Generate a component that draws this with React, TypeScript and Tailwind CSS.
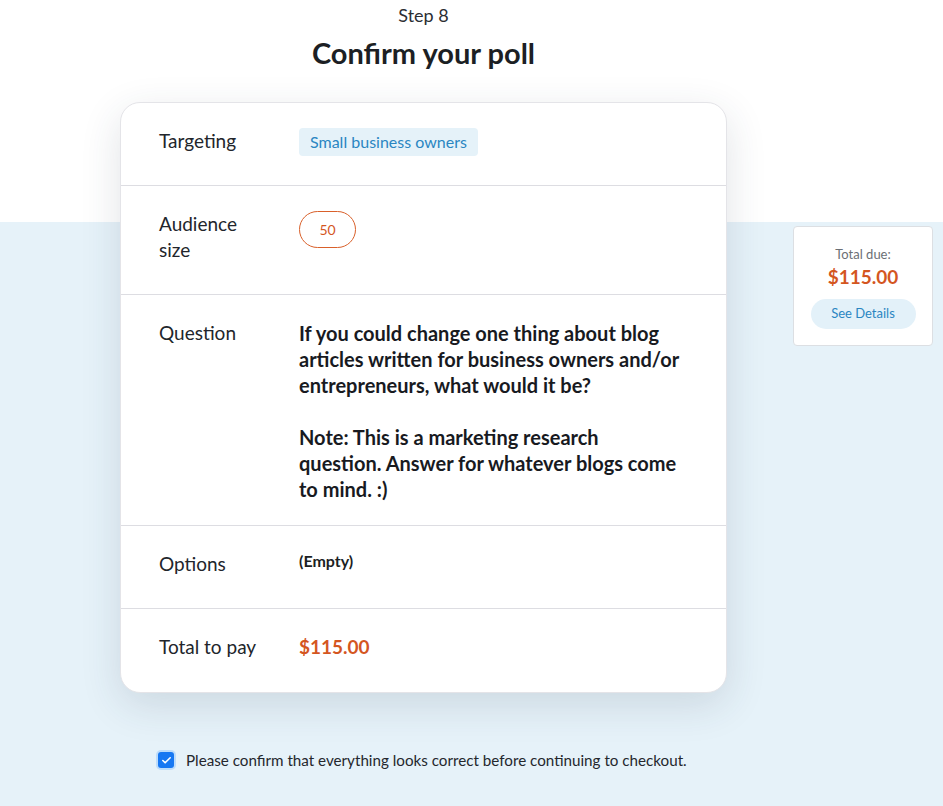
import React, { useState } from 'react';
import { Check } from 'lucide-react';

const font = { fontFamily: 'Lato, "Noto Sans", sans-serif' };

function Row({ label, children, className = '' }: { label: React.ReactNode; children: React.ReactNode; className?: string }) {
  return (
    <div className={`flex pl-[38px] pr-[20px] border-b border-[#dddde2] last:border-b-0 ${className}`}>
      <div className="w-[140px] shrink-0 text-[19px] leading-[26px] text-[#22252b]">{label}</div>
      <div className="flex-1 min-w-0">{children}</div>
    </div>
  );
}

export default function App() {
  const [confirmed, setConfirmed] = useState(true);

  return (
    <div
      style={font}
      className="relative min-h-[806px] bg-[linear-gradient(to_bottom,#ffffff_0px,#ffffff_222px,#e6f2f9_222px)]"
    >
      <div className="w-[847px] pt-[3px]">
        <p className="text-center text-[18px] leading-6 text-[#2b2e33]">Step 8</p>
        <h1 className="mt-2 text-center text-[29px] leading-9 font-bold text-[#1c1f24]">Confirm your poll</h1>

        <section className="mx-auto mt-[31px] w-[607px] bg-white rounded-[20px] border border-[#e4e4e8] shadow-[0_12px_40px_rgba(40,60,80,0.14)]">
          <Row label="Targeting" className="h-[83px] pt-[25px]">
            <span className="inline-block rounded-[4px] bg-[#e5f2f9] px-[11px] py-[2px] text-[16px] leading-6 text-[#2a86c2]">
              Small business owners
            </span>
          </Row>

          <Row label={<>Audience<br />size</>} className="h-[109px] pt-[25px]">
            <span className="inline-flex h-[37px] w-[57px] items-center justify-center rounded-full border border-[#d9602a] text-[14px] text-[#d4561f]">
              50
            </span>
          </Row>

          <Row label="Question" className="h-[231px] pt-[25px]">
            <p className="w-[383px] text-[20px] leading-[26px] font-bold text-[#181a1f]">
              If you could change one thing about blog articles written for business owners and/or entrepreneurs, what would it be?
              <br />
              <br />
              Note: This is a marketing research question. Answer for whatever blogs come to mind. :)
            </p>
          </Row>

          <Row label="Options" className="h-[83px] pt-[25px]">
            <p className="text-[16px] leading-[20px] font-bold text-[#1c1f24]">(Empty)</p>
          </Row>

          <Row label="Total to pay" className="h-[83px] pt-[25px]">
            <p className="text-[19px] leading-[26px] font-bold text-[#d4561f]">$115.00</p>
          </Row>
        </section>

        <label className="mt-[55px] ml-[156px] flex items-center gap-[10px] cursor-pointer">
          <span className="rounded-[5px] bg-[#bcdcfb] p-[2px]">
            <button
              type="button"
              onClick={() => setConfirmed(!confirmed)}
              className={`flex h-[16px] w-[16px] items-center justify-center rounded-[3px] ${confirmed ? 'bg-[#1677f2]' : 'bg-white border border-[#999]'}`}
            >
              {confirmed && <Check size={11} strokeWidth={3.5} className="text-white" />}
            </button>
          </span>
          <span className="text-[15.2px] leading-6 text-[#24272d]">
            Please confirm that everything looks correct before continuing to checkout.
          </span>
        </label>
      </div>

      <aside className="absolute left-[793px] top-[226px] w-[140px] h-[120px] rounded-[4px] border border-[#dcdfe3] bg-white flex flex-col items-center pt-[19px]">
        <p className="text-[13px] leading-4 text-[#6b6f75]">Total due:</p>
        <p className="mt-[3px] text-[19px] leading-6 font-bold text-[#d4561f]">$115.00</p>
        <button type="button" className="mt-[10px] h-[30px] w-[105px] rounded-full bg-[#e3f1f9] text-[13px] text-[#2a86c2]">
          See Details
        </button>
      </aside>
    </div>
  );
}
